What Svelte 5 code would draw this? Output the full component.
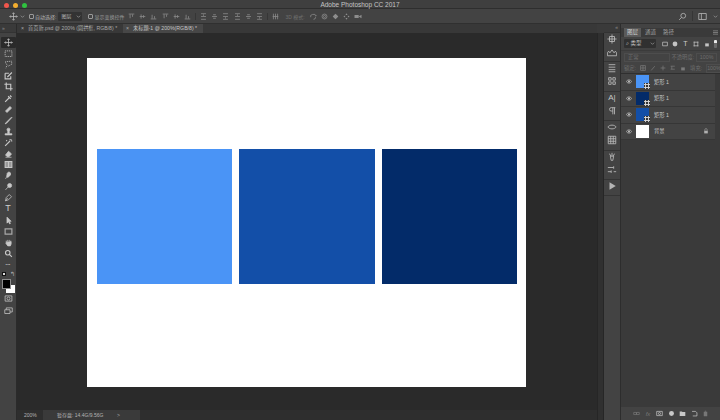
<script>
  const tools = [
    { d: 'M6 1v10M1 6h10M6 1 4.5 2.5M6 1l1.500 1.500M6 11 4.500 9.500M6 11l1.500-1.500M1 6l1.500-1.500M1 6l1.500 1.500M11 6 9.500 4.500M11 6 9.500 7.500', active: true },
    { d: 'M1.500 2.500h9v7.500h-9z', dash: true },
    { d: 'M1.500 2.500 10 1.500l.5 4L6 8 3.500 6zM3.500 8l-1 3', dash: true },
    { d: 'M1.500 3h5M1.500 3v7.500h7.500V7M4.500 8l6-6', bold: true },
    { d: 'M3 .5v8.500h8.500M.5 3H9v8.500', bold: true },
    { d: 'M1.500 10.500 7 5M5.500 3l3.500 3.500M8 2l2 2', bold: true },
    { d: 'M2 8 8 2l2 2-6 6zM6 4l2 2', fill: true },
    { d: 'M1.500 10.500 3 8.500 10 1.500 10.500 2 3.500 9.500z', fill: true },
    { d: 'M1.500 10.500h9V9h-9zM5 8.500V6L4 3.500a2 2 0 0 1 4 0L7 6v2.500z', fill: true },
    { d: 'M1.500 10.500 8 4M8 1.500v1.500M11 4H9.500M10 2l-1 1M3 3l1 1', bold: true },
    { d: 'M2 8 6 3 10 6.500 7 10H4zM2 11h8', fill: true },
    { d: 'M1.500 2h9v8h-9zM6 2v8', grad: true },
    { d: 'M7.500 1.500a3 3 0 0 1 0 5L5 8.500 3.500 7.500 4 5a3 3 0 0 1 3.500-3.500zM3.500 8 2 10.500', fill: true },
    { d: 'M7.500 2a2.700 2.700 0 1 1 0 5.400 2.700 2.700 0 0 1 0-5.400zM5.500 6.500 2 10.500', fill: true },
    { d: 'M2 10.500 3 6l4-4 3 3-4 4zM2 10.500 5 7' },
    { text: 'T' },
    { d: 'M4 1.500v8l2-2 1.500 3 1-.5L7 7h2.500z', fill: true },
    { d: 'M1.500 2.500h9v7h-9z', thick: true },
    { d: 'M3 5.500V3.500M5 5V2.500M7 5V2.500M9 5.500V3.500M3 5.500 2.500 7 5 10.500h3.500L9.500 8V5z', fill: true },
    { d: 'M5 2a3 3 0 1 1 0 6 3 3 0 0 1 0-6zM7.500 7.500l3 3', bold: true }
  ];
  const optionAlign = [
    'M1 1.500h8M3 2v5.500M6.500 2v3.500',
    'M1 5h8M3 2v6M6.500 3v4',
    'M1 8.500h8M3 2.500v5.500M6.500 4.500V8'
  ];
  const optionDist = [
    'M1.500 1h7M1.500 5h7M1.500 9h7M5 2v2',
    'M1.500 5h7M3 2.500h4M3 7.500h4',
    'M1.500 9h7M1.500 5h7M1.500 1h7M5 6v2'
  ];
  const layers = [
    { name: '矩形 1', tone: 'lt', smart: true },
    { name: '矩形 1', tone: 'dark', smart: true },
    { name: '矩形 1', tone: 'mid', smart: true },
    { name: '背景', tone: 'white', lock: true }
  ];
  const dock = [
    { group: ['M6 .5v11M.5 6h11M3 3h6v6H3z', 'M.5 10.500h11V7L10 5 8.500 7 6 3.500 3.500 7 2 5 .5 7z'] },
    { group: ['M2 2h8M2 5h8M2 8h8M2 10.500h8', 'M2 2h3v3H2zM7 2h3v3H7zM2 7h3v3H2zM7 7h3v3H7z'] },
    { group: ['A', 'M5 2h5M7 2v8M9 2v8M7 6H5a2 2 0 0 1 0-4'] },
    { group: ['M1 6c2-3 8-3 10 0-2 3-8 3-10 0z', 'M1.500 1.500h9v9h-9zM4.500 1.500v9M7.500 1.500v9M1.500 4.500h9M1.500 7.500h9'] },
    { group: ['M4 5l1 5h2l1-5zM3 2l1.500 3M6 1v4M9 2 7.500 5', 'M1 3h7M1 8h4M8 1.500v3M5 6.500v3M8 8h3'] },
    { group: ['play'] }
  ];
</script>

<div class="app">
  <header class="title">
    <div class="lights">
      <span class="light red"></span><span class="light amber"></span><span class="light green"></span>
    </div>
    <div class="title-text">Adobe Photoshop CC 2017</div>
  </header>

  <div class="options">
    <svg class="ic move" viewBox="0 0 12 12"><path d="M6 1v10M1 6h10M6 1 4.500 2.500M6 1l1.500 1.500M6 11 4.500 9.500M6 11l1.500-1.500M1 6l1.500-1.500M1 6l1.500 1.500M11 6 9.500 4.500M11 6 9.500 7.500"/></svg>
    <svg class="chev first" viewBox="0 0 6 6"><path d="M1 2l2 2 2-2"/></svg>
    <span class="check"></span>
    <span class="opt-label">自动选择:</span>
    <span class="select">图层<svg class="chev in" viewBox="0 0 6 6"><path d="M1 2l2 2 2-2"/></svg></span>
    <span class="check second"></span>
    <span class="opt-label dim">显示变换控件</span>
    <div class="align-group">
      <div class="triple">{#each optionAlign as d}<svg class="ic-sm" viewBox="0 0 10 10"><path d={d}/></svg>{/each}</div>
      <div class="triple">{#each optionAlign as d}<svg class="ic-sm" viewBox="0 0 10 10"><path d={d}/></svg>{/each}</div>
    </div>
    <div class="align-group tight">
      <div class="triple">{#each optionDist as d}<svg class="ic-sm" viewBox="0 0 10 10"><path d={d}/></svg>{/each}</div>
      <div class="triple">{#each optionDist as d}<svg class="ic-sm" viewBox="0 0 10 10"><path d={d}/></svg>{/each}</div>
    </div>
    <div class="align-group tight">
      <svg class="ic-sm" viewBox="0 0 10 10"><path d="M2 1v8M5 1v8M8 1v8M1 5h8"/></svg>
    </div>
    <span class="mode">3D 模式:</span>
    <div class="modes">
      <svg class="ic-sm" viewBox="0 0 10 10"><path d="M1 6a4 3 0 0 1 8-2M9 4l-2 0M5 9a3 3 0 0 0 3-3"/></svg>
      <svg class="ic-sm" viewBox="0 0 10 10"><circle cx="5" cy="5" r="3.500"/><circle cx="5" cy="5" r="1.500"/></svg>
      <svg class="ic-sm" viewBox="0 0 10 10"><path class="solid" d="M5 1 7 3 9 5 7 7 5 9 3 7 1 5 3 3z"/></svg>
      <svg class="ic-sm" viewBox="0 0 10 10"><path class="solid" d="M5 .5 6.500 3h-3zM5 9.500 3.500 7h3zM.5 5 3 3.500v3zM9.500 5 7 6.500v-3z"/></svg>
      <svg class="ic-sm wide" viewBox="0 0 10 10"><path class="solid" d="M0 3h6v4H0zM6 5l4-2.500v5z"/></svg>
    </div>
    <div class="opt-right">
      <svg class="ic" viewBox="0 0 12 12"><circle cx="7" cy="5" r="3.200"/><path d="M4.500 7.500 1.500 10.500"/></svg>
      <i></i>
      <svg class="ic" viewBox="0 0 12 12"><path d="M1 2h10v8H1zM4.500 2v8"/></svg>
      <svg class="chev" viewBox="0 0 6 6"><path d="M1 2l2 2 2-2"/></svg>
    </div>
  </div>

  <div class="work">
    <aside class="tools">
      <div class="collapse">»</div>
      {#each tools as t}
        <div class="tool" class:active={t.active}>
          {#if t.text}
            <span class="tool-t">{t.text}</span>
          {:else}
            <svg class="tool-ic" class:dash={t.dash} class:fill={t.fill} class:thick={t.thick} class:bold={t.bold} class:grad={t.grad} viewBox="0 0 12 12"><path d={t.d}/></svg>
          {/if}
        </div>
      {/each}
      <div class="more">•••</div>
      <div class="swatches">
        <span class="mini"></span><span class="swap">↰</span>
        <span class="bg"></span><span class="fg"></span>
      </div>
      <svg class="tool-ic mask" viewBox="0 0 12 12"><path d="M1.500 2.500h9v7h-9z"/><circle cx="6" cy="6" r="2"/></svg>
      <svg class="tool-ic screen" viewBox="0 0 12 12"><path d="M1 5h7v5H1zM3 5V2.500h8V8H8"/></svg>
    </aside>

    <main class="center">
      <div class="tabs">
        <div class="tab"><span class="x">×</span>首页新.psd @ 200% (圆拱框, RGB/8) *</div>
        <div class="tab on"><span class="x">×</span>未标题-1 @ 200%(RGB/8) *</div>
      </div>
      <div class="canvas">
        <div class="doc">
          <div class="sq light-b"></div>
          <div class="sq mid-b"></div>
          <div class="sq dark-b"></div>
        </div>
      </div>
      <footer class="status">
        <span class="zoom">200%</span>
        <span class="scratch">暂存盘: 14.4G/9.56G<b>&gt;</b></span>
      </footer>
    </main>

    <div class="scroll"></div>

    <aside class="dock">
      <div class="collapse dk">«</div>
      {#each dock as g}
        <div class="dock-group">
          {#each g.group as d}
            {#if d === 'A'}
              <span class="dock-a">A|</span>
            {:else if d === 'play'}
              <svg class="dock-ic" viewBox="0 0 12 12"><path class="solid" d="M3 1.500 10.500 6 3 10.500z"/></svg>
            {:else}
              <svg class="dock-ic" viewBox="0 0 12 12"><path d={d}/></svg>
            {/if}
          {/each}
        </div>
      {/each}
    </aside>

    <aside class="panel">
      <div class="ptabs">
        <span class="ptab on">图层</span><span class="ptab">通道</span><span class="ptab">路径</span>
        <svg class="pmenu" viewBox="0 0 6 6"><path d="M0 1h6M0 3h6M0 5h6"/></svg>
      </div>
      <div class="pfilter">
        <span class="kind">⌕ 类型<svg class="chev kind-c" viewBox="0 0 6 6"><path d="M1 2l2 2 2-2"/></svg></span>
        <svg class="fic" viewBox="0 0 10 10"><path d="M1 2h8v6H1z"/></svg>
        <svg class="fic" viewBox="0 0 10 10"><circle class="solid" cx="5" cy="5" r="4"/></svg>
        <span class="fic-t">T</span>
        <svg class="fic" viewBox="0 0 10 10"><path d="M2 1v8M8 1v8M1 2h8M1 8h8"/></svg>
        <svg class="fic" viewBox="0 0 10 10"><path class="solid" d="M2 4h6v5H2z"/></svg>
        <span class="toggle"></span>
      </div>
      <div class="pblend">
        <span class="blend">正常</span>
        <span class="plabel">不透明度:</span>
        <span class="pval">100%</span>
      </div>
      <div class="plock">
        <span class="plabel">锁定:</span>
        <svg class="fic lk" viewBox="0 0 10 10"><path d="M1 1h8v8H1zM1 5h8M5 1v8"/></svg>
        <svg class="fic lk" viewBox="0 0 10 10"><path d="M2 9l6-7"/></svg>
        <svg class="fic lk" viewBox="0 0 10 10"><path d="M5 1v8M1 5h8"/></svg>
        <svg class="fic lk" viewBox="0 0 10 10"><path d="M1 2h7M3 2v5M1 7h7"/></svg>
        <svg class="fic lk" viewBox="0 0 10 10"><path class="solid" d="M2 4h6v5H2z"/></svg>
        <span class="plabel fill-l">填充:</span>
        <span class="pval">100%</span>
      </div>
      <div class="layers">
        {#each layers as l}
          <div class="layer">
            <svg class="eye" viewBox="0 0 10 8"><path d="M.5 4c2-3.500 7-3.500 9 0-2 3.500-7 3.500-9 0z"/><circle class="solid" cx="5" cy="4" r="1.500"/></svg>
            <span class="thumb {l.tone}">
              {#if l.smart}
                <svg class="badge" viewBox="0 0 6 6"><path d="M1.500 0v6M4.500 0v6M0 1.500h6M0 4.500h6"/></svg>
              {/if}
            </span>
            <span class="lname">{l.name}</span>
            {#if l.lock}
              <svg class="llock" viewBox="0 0 10 10"><path d="M3 4.500V3a2 2 0 0 1 4 0v1.500"/><path class="solid" d="M2 4.500h6V9H2z"/></svg>
            {/if}
          </div>
        {/each}
      </div>
      <div class="pfoot">
        <svg class="foot" viewBox="0 0 10 10"><path d="M1 3.500h4v3H1zM5 3.500h4v3H5z"/></svg>
        <span class="foot-t">fx</span>
        <svg class="foot on" viewBox="0 0 10 10"><path d="M1 2h8v6H1z"/><circle cx="5" cy="5" r="1.500"/></svg>
        <svg class="foot on" viewBox="0 0 10 10"><circle class="solid" cx="5" cy="5" r="3.500"/></svg>
        <svg class="foot on" viewBox="0 0 10 10"><path class="solid" d="M1 2h3l1 1h4v5.500H1z"/></svg>
        <svg class="foot on" viewBox="0 0 10 10"><path d="M1.500 2h5M8.500 4v4.500H2.500M6.500 2 8.500 4"/></svg>
        <svg class="foot" viewBox="0 0 10 10"><path class="solid" d="M2.500 2.500h5V9h-5zM4 1h2v1H4z"/></svg>
      </div>
    </aside>
  </div>
</div>

<style>
  :global(body) { margin: 0; background: #2a2a2a; }
  * { box-sizing: border-box; }
  .app {
    width: 720px; height: 420px; overflow: hidden;
    display: flex; flex-direction: column;
    font-family: "Liberation Sans", "Noto Sans CJK SC", sans-serif;
    color: #b9b9b9; background: #2a2a2a;
  }
  svg { display: block; flex: none; }
  svg path, svg circle { fill: none; stroke: #bdbdbd; stroke-width: 1; }
  svg .solid { fill: #b5b5b5; stroke: none; }

  .title {
    height: 9px; flex: none; background: #3f3f3f; border-bottom: 1px solid #2e2e2e;
    position: relative; display: flex; align-items: center; justify-content: center;
  }
  .lights { position: absolute; left: 4px; top: 3px; display: flex; gap: 4px; }
  .light { width: 5px; height: 5px; border-radius: 50%; }
  .red { background: #f0564c; }
  .amber { background: #f3ae2f; }
  .green { background: #2fc23f; }
  .title-text { font-size: 6.500px; color: #c4c4c4; line-height: 9px; }

  .options {
    height: 15px; flex: none; background: #434343; border-bottom: 1px solid #303030;
    display: flex; align-items: center; padding-left: 9px; font-size: 5px;
  }
  .ic { width: 9px; height: 9px; }
  .move { width: 9px; height: 9px; }
  .chev { width: 5px; height: 5px; margin-left: 1px; }
  .chev.first { margin-left: 2px; }
  .chev path { stroke: #a8a8a8; stroke-width: .8; }
  .check { width: 5px; height: 5px; border: 1px solid #9a9a9a; border-radius: 1px; margin-left: 4px; margin-right: 1px; }
  .check.second { margin-left: 6px; }
  .opt-label { color: #b5b5b5; white-space: nowrap; }
  .opt-label.dim { color: #9a9a9a; width: 27px; }
  .select {
    width: 24px; height: 9px; background: #333; margin-left: 2px; border-radius: 1px;
    padding-left: 3px; line-height: 9px; position: relative; color: #bbb;
  }
  .chev.in { position: absolute; right: 1px; top: 2px; }
  .align-group { display: flex; align-items: center; gap: 5px; margin-left: 7px; }
  .triple { display: flex; gap: 4px; }
  .align-group.tight { margin-left: 4px; padding-left: 4px; border-left: 1px solid #363636; }
  .ic-sm { width: 7px; height: 7px; }
  .ic-sm path, .ic-sm circle { stroke: #8d8d8d; stroke-width: 1.100; }
  .ic-sm .solid { fill: #8d8d8d; stroke: none; }
  .ic-sm.wide { width: 8px; }
  .mode { margin-left: 6px; color: #6f6f6f; white-space: nowrap; }
  .modes { display: flex; gap: 4px; margin-left: 5px; }
  .opt-right { margin-left: auto; display: flex; align-items: center; gap: 5px; padding-right: 2px; }
  .opt-right i { width: 1px; height: 10px; background: #363636; }

  .work { flex: 1; display: flex; min-height: 0; background: #3a3a3a; }

  .tools {
    width: 17px; flex: none; background: #434343; border-right: 1px solid #2b2b2b;
    display: flex; flex-direction: column; align-items: center;
  }
  .collapse {
    height: 9px; width: 100%; font-size: 5px; line-height: 8px; color: #8a8a8a; padding-left: 2px;
    flex: none; background: #3a3a3a; border-bottom: 1px solid #333;
  }
  .tools .collapse { margin-bottom: 4px; }
  .tool { width: 15px; height: 11.100px; display: flex; align-items: center; justify-content: center; flex: none; }
  .tool.active { background: #2a2a2a; border-radius: 1px; }
  .tool-ic { width: 9px; height: 9px; }
  .tool-ic path, .tool-ic circle { stroke: #c8c8c8; }
  .tool-ic.dash path { stroke-dasharray: 1.500 1; }
  .tool-ic.fill path { fill: #c8c8c8; }
  .tool-ic.bold path { stroke-width: 1.500; }
  .tool-ic.grad path { fill: #9a9a9a; stroke-width: 1.400; }
  .tool-ic.thick path { stroke-width: 1.600; stroke: #a8a8a8; }
  .tool-t { font-size: 9px; line-height: 11px; color: #cfcfcf; }
  .more { font-size: 4px; line-height: 9px; height: 9px; margin-top: 1px; color: #c6c6c6; letter-spacing: .3px; }
  .swatches { position: relative; width: 14px; height: 21px; flex: none; }
  .mini { position: absolute; left: 1px; top: 3px; width: 4px; height: 4px; background: #ddd; border: 1px solid #111; }
  .swap { position: absolute; right: 0; top: 2px; font-size: 6px; line-height: 7px; color: #bbb; }
  .bg { position: absolute; left: 5px; top: 16px; width: 9px; height: 8px; background: #fff; }
  .fg { position: absolute; left: 1px; top: 10px; width: 7px; height: 8px; background: #000; border: 1px solid #8c8c8c; box-sizing: content-box; }
  .mask { margin-top: 4.500px; }
  .screen { margin-top: 3px; }

  .center { flex: 1; min-width: 0; display: flex; flex-direction: column; }
  .tabs { height: 9px; flex: none; display: flex; background: #383838; font-size: 5.200px; line-height: 9px; }
  .tab { padding: 0 0 0 4px; color: #a9a9a9; white-space: nowrap; width: 106px; overflow: hidden; }
  .tab.on { background: #474747; color: #c6c6c6; width: 80px; padding-left: 3px; }
  .x { margin-right: 4px; color: #aaa; }
  .canvas { flex: 1; min-height: 0; display: flex; justify-content: center; align-items: flex-start; padding: 25px 1px 0 0; background: #2a2a2a; }
  .doc {
    width: 439px; height: 329px; background: #fff; flex: none;
    display: flex; gap: 7px; align-items: center; padding: 0 9px 12px 9.500px;
  }
  .sq { flex: 1; height: 135px; }
  .light-b { background: #4a94f6; }
  .mid-b { background: #134fa8; }
  .dark-b { background: #032b69; }
  .status { height: 10px; flex: none; display: flex; background: #2e2e2e; font-size: 5px; line-height: 10px; color: #b4b4b4; }
  .zoom { width: 26px; padding-left: 7px; }
  .scratch { width: 97px; background: #3a3a3a; padding-left: 14px; position: relative; }
  .scratch b { position: absolute; right: 20px; font-weight: 400; color: #aaa; }

  .scroll { width: 7px; flex: none; background: #303030; margin-top: 9px; border-left: 1px solid #262626; border-right: 1px solid #262626; }

  .dock { width: 17px; flex: none; background: #434343; display: flex; flex-direction: column; align-items: center; border-right: 1px solid #2d2d2d; }
  .collapse.dk { height: 9px; line-height: 6px; text-align: right; padding-right: 2px; }
  .dock-group { width: 100%; display: flex; flex-direction: column; align-items: center; gap: 3px; padding: 1px 0 4.400px; border-bottom: 1px solid #343434; }
  .dock-ic { width: 10px; height: 10px; }
  .dock-a { font-size: 8px; line-height: 10px; color: #c8c8c8; }

  .panel { width: 99px; flex: none; background: #434343; display: flex; flex-direction: column; padding-top: 4px; }
  .ptabs { height: 9px; flex: none; display: flex; align-items: center; background: #3a3a3a; font-size: 5.500px; }
  .ptab { padding: 0 3px; height: 9px; line-height: 9px; margin-left: 1px; color: #9f9f9f; }
  .ptab.on { background: #5a5a5a; color: #d5d5d5; margin-left: 3px; }
  .pmenu { width: 5px; height: 5px; margin-left: auto; margin-right: 2px; }
  .pmenu path { stroke: #999; stroke-width: .8; }
  .pfilter { height: 14px; flex: none; display: flex; align-items: center; padding: 0 3px; gap: 4.500px; border-bottom: 1px solid #3b3b3b; }
  .kind { width: 32px; height: 9px; background: #303030; border-radius: 1px; font-size: 5.500px; line-height: 9px; padding-left: 2px; position: relative; color: #c2c2c2; margin-right: 1px; }
  .kind-c { position: absolute; right: 1px; top: 2px; }
  .fic { width: 6px; height: 6px; }
  .fic path, .fic circle { stroke: #c4c4c4; stroke-width: 1.200; }
  .fic .solid { fill: #c4c4c4; stroke: none; }
  .fic-t { font-size: 7px; color: #ccc; width: 6px; text-align: center; }
  .toggle { width: 3px; height: 8px; background: #6a6a6a; border-top: 3px solid #e8e8e8; border-radius: 1px; }
  .pblend { height: 12px; flex: none; display: flex; align-items: center; padding: 0 3px; font-size: 5.300px; color: #6e6e6e; gap: 2px; }
  .blend { width: 48px; height: 9px; border: 1px solid #4d4d4d; padding-left: 3px; line-height: 7px; }
  .plabel { color: #6e6e6e; white-space: nowrap; }
  .pval { width: 22px; height: 9px; border: 1px solid #4d4d4d; line-height: 7px; text-align: center; }
  .plock { height: 11px; flex: none; display: flex; align-items: center; padding: 0 3px; font-size: 5.300px; gap: 4px; border-bottom: 1px solid #2f2f2f; color: #6e6e6e; }
  .lk path { stroke: #7a7a7a; }
  .lk .solid { fill: #7a7a7a; stroke: none; }
  .fill-l { margin-left: auto; }
  .layers { flex: 1; min-height: 0; background: #3a3a3a; display: flex; flex-direction: column; padding-right: 5px; }
  .layer { height: 16.500px; flex: none; display: flex; align-items: center; background: #434343; border-bottom: 1px solid #363636; }
  .eye { width: 6px; height: 5px; margin-left: 5px; }
  .eye path { stroke: #d0d0d0; stroke-width: 1.100; }
  .eye .solid { fill: #d0d0d0; }
  .thumb { width: 13px; height: 13px; margin-left: 4px; position: relative; flex: none; }
  .thumb.lt { background: #4a94f6; }
  .thumb.dark { background: #032b69; }
  .thumb.mid { background: #134fa8; }
  .thumb.white { background: #fff; }
  .badge { position: absolute; right: -1px; bottom: -1px; width: 6px; height: 6px; background: #333; }
  .badge path { stroke: #ddd; stroke-width: .9; }
  .lname { font-size: 5.300px; margin-left: 5px; color: #c6c6c6; white-space: nowrap; }
  .llock { width: 6px; height: 6px; margin-left: auto; margin-right: 6px; }
  .llock path { stroke: #b0b0b0; stroke-width: .9; }
  .llock .solid { fill: #b0b0b0; stroke: none; }
  .pfoot { height: 13px; flex: none; display: flex; align-items: center; justify-content: flex-end; gap: 4.500px; padding-right: 11px; background: #434343; }
  .foot { width: 7px; height: 7px; }
  .foot path, .foot circle { stroke: #777; }
  .foot .solid { fill: #777; stroke: none; }
  .foot.on path, .foot.on circle { stroke: #c8c8c8; }
  .foot.on .solid { fill: #c8c8c8; stroke: none; }
  .foot-t { font-size: 6px; font-style: italic; color: #777; width: 7px; text-align: center; }
</style>
